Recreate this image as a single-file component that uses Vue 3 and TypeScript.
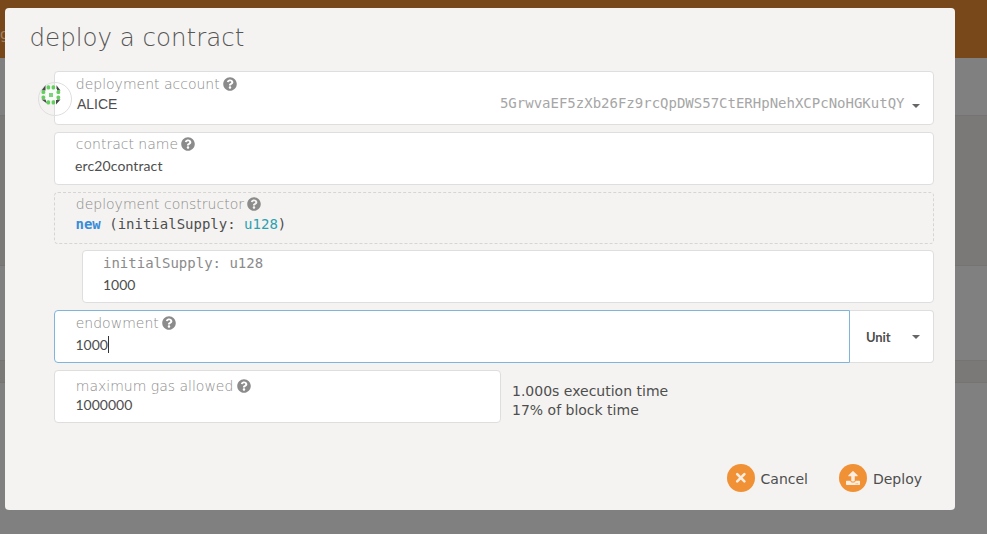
<script setup lang="ts">
import { ref } from 'vue'

const title = 'deploy a contract'
const contractName = ref('erc20contract')
const initialSupply = ref('1000')
const endowment = ref('1000')
const gas = ref('1000000')
const helpPath =
  'M504 256c0 137-111 248-248 248S8 393 8 256 119 8 256 8s248 111 248 248zM262.700 90c-54.500 0-89.300 23-116.500 63.800-3.500 5.300-2.400 12.400 2.700 16.300l34.700 26.300c5.200 3.900 12.600 3 16.700-2.100 17.900-22.700 30.100-35.800 57.300-35.800 20.400 0 45.700 13.100 45.700 33 0 15-12.400 22.700-32.500 34C247.100 238.500 216 254.900 216 296v4c0 6.600 5.400 12 12 12h56c6.600 0 12-5.400 12-12v-1.300c0-28.500 83.200-29.600 83.200-106.700 0-58-60.200-102-116.500-102zM256 338c-25.400 0-46 20.600-46 46s20.600 46 46 46 46-20.600 46-46-20.600-46-46-46z'
</script>

<template>
  <div class="page">
    <div class="backdrop">
      <div class="topbar"><span>g</span></div>
      <div class="tabs"></div>
      <div class="band tall"></div>
      <div class="panel"></div>
      <div class="band short"></div>
      <div class="rest"></div>
    </div>
    <section class="modal">
      <h1>{{ title }}</h1>
      <div class="fields">
        <div class="field account">
          <svg class="avatar" viewBox="0 0 34 34">
            <circle cx="17" cy="17" r="16.500" fill="none" stroke="#dededf" />
            <path d="M7.500 3.200V8.500H3.500zM18.500 3.200V8.500H22.500zM3.500 17.500H7.500L9 21.500zM18 22.500v-5h4.500z" fill="#464646" />
            <path d="M8 7h11v11H8z" fill="#fbfbfb" />
            <g fill="#60d25c">
              <rect x="8.600" y="3.200" width="3.500" height="4.200" rx="1.500" />
              <rect x="13.600" y="3.200" width="3.500" height="4.200" rx="1.500" />
              <rect x="8.600" y="18.300" width="3.500" height="4.200" rx="1.500" />
              <rect x="13.600" y="18.300" width="3.500" height="4.200" rx="1.500" />
              <rect x="3.500" y="8.300" width="3.700" height="3.800" rx="1.500" />
              <rect x="3.500" y="13.500" width="3.700" height="3.800" rx="1.500" />
              <rect x="18.500" y="8.300" width="3.700" height="3.800" rx="1.500" />
              <rect x="18.500" y="13.500" width="3.700" height="3.800" rx="1.500" />
              <rect x="11" y="11" width="4" height="4" fill="#7ad47a" />
            </g>
          </svg>
          <label>deployment account <svg class="help" viewBox="0 0 512 512"><path :d="helpPath" /></svg></label>
          <div class="row">
            <span class="name">ALICE</span>
            <span class="address">5GrwvaEF5zXb26Fz9rcQpDWS57CtERHpNehXCPcNoHGKutQY</span>
            <i class="caret"></i>
          </div>
        </div>
        <div class="field contract">
          <label>contract name <svg class="help" viewBox="0 0 512 512"><path :d="helpPath" /></svg></label>
          <div class="value">{{ contractName }}</div>
        </div>
        <div class="field ctor">
          <label>deployment constructor <svg class="help" viewBox="0 0 512 512"><path :d="helpPath" /></svg></label>
          <div class="code"><b>new</b> (initialSupply: <em>u128</em>)</div>
        </div>
        <div class="field supply">
          <div class="code param">initialSupply: u128</div>
          <div class="value">{{ initialSupply }}</div>
        </div>
        <div class="endow-row">
          <div class="field endow">
            <label>endowment <svg class="help" viewBox="0 0 512 512"><path :d="helpPath" /></svg></label>
            <div class="value">{{ endowment }}<i class="cursor"></i></div>
          </div>
          <div class="unit">
            <span>Unit</span>
            <i class="caret"></i>
          </div>
        </div>
        <div class="gas-row">
          <div class="field gas">
            <label>maximum gas allowed <svg class="help" viewBox="0 0 512 512"><path :d="helpPath" /></svg></label>
            <div class="value">{{ gas }}</div>
          </div>
          <div class="estimate">
            <div>1.000s execution time</div>
            <div>17% of block time</div>
          </div>
        </div>
      </div>
      <div class="actions">
        <button type="button">
          <span class="disc">
            <svg width="14" height="14" viewBox="0 0 14 14"><path d="M3.200 3.200l7.200 7.200M10.400 3.200l-7.200 7.200" stroke="#fbeee0" stroke-width="2.600" stroke-linecap="round" /></svg>
          </span>
          <span class="caption">Cancel</span>
        </button>
        <button type="button">
          <span class="disc">
            <svg width="14" height="14" viewBox="0 0 512 512"><path fill="#fbeee0" d="M296 384h-80c-13.300 0-24-10.700-24-24V192h-87.700c-17.800 0-26.700-21.500-14.100-34.100L242.300 5.700c7.500-7.500 19.800-7.500 27.300 0l152.200 152.200c12.600 12.600 3.700 34.100-14.100 34.100H320v168c0 13.300-10.700 24-24 24zm216-8v112c0 13.300-10.700 24-24 24H24c-13.300 0-24-10.700-24-24V376c0-13.300 10.700-24 24-24h136v8c0 30.900 25.100 56 56 56h80c30.900 0 56-25.100 56-56v-8h136c13.300 0 24 10.700 24 24zm-124 88c0-11-9-20-20-20s-20 9-20 20 9 20 20 20 20-9 20-20zm64 0c0-11-9-20-20-20s-20 9-20 20 9 20 20 20 20-9 20-20z" /></svg>
          </span>
          <span class="caption">Deploy</span>
        </button>
      </div>
    </section>
  </div>
</template>

<style>
body {
  overflow: hidden;
}
</style>

<style scoped>
* {
  box-sizing: border-box;
}
.page {
  display: flex;
  position: relative;
  width: 987px;
  height: 534px;
  padding: 8px 32px 24px 5px;
  font-family: 'DejaVu Sans', sans-serif;
  font-size: 14px;
  color: #4e4e4e;
}
.backdrop {
  position: absolute;
  inset: 0;
  display: flex;
  flex-direction: column;
  background: #808080;
}
.topbar {
  height: 58px;
  padding-top: 25px;
  background: #79481a;
  color: #a18467;
  font-size: 14px;
  line-height: 18px;
}
.tabs {
  height: 57px;
}
.band {
  background: #7a7977;
  border-top: 1px solid #757473;
  border-bottom: 1px solid #757473;
}
.tall {
  height: 151px;
}
.panel {
  height: 94px;
}
.short {
  height: 23px;
}
.rest {
  flex: 1;
}
.modal {
  position: relative;
  width: 950px;
  height: 502px;
  padding: 13px 21px 0 24.500px;
  border-radius: 4px;
  background: #f4f3f1;
}
h1 {
  margin: 0;
  height: 50px;
  font-size: 24.500px;
  line-height: 34px;
  font-weight: 200;
  color: #565656;
  white-space: nowrap;
}
.fields {
  display: flex;
  flex-direction: column;
  gap: 7px;
  margin-left: 24.500px;
}
.field {
  position: relative;
  height: 53px;
  padding: 2px 13.500px 0 20.500px;
  border: 1px solid #dededf;
  border-radius: 4px;
  background: #fff;
}
label {
  display: flex;
  align-items: center;
  gap: 3.250px;
  height: 20px;
  padding-left: 0.250px;
  font-weight: 200;
  color: #8b8b8b;
  white-space: nowrap;
}
.help {
  width: 14px;
  height: 14px;
  fill: #8b8b8b;
}
.value {
  display: flex;
  align-items: center;
  height: 20px;
  margin-top: 1px;
  font-family: Lato, sans-serif;
}
.contract .value {
  margin-left: -0.500px;
  letter-spacing: 0.120px;
}
.account {
  height: 54px;
}
.avatar {
  position: absolute;
  left: -17px;
  top: 10px;
  width: 34px;
  height: 34px;
}
.row {
  display: flex;
  align-items: center;
  height: 20px;
  margin-top: -1px;
}
.name {
  flex: 1;
  padding: 2px 0 0 1.500px;
  font-family: 'Liberation Sans', sans-serif;
}
.address {
  font-family: 'DejaVu Sans Mono', monospace;
  color: #a6a6a6;
}
.caret {
  width: 0;
  height: 0;
  margin-left: 7px;
  border: 4px solid transparent;
  border-top-color: #666;
  border-bottom: 0;
}
.row .caret {
  margin-top: 5px;
}
.contract {
  padding-top: 1px;
}
.ctor {
  height: 52px;
  border-style: dashed;
  border-color: #d5d5d4;
  background: transparent;
}
.ctor label {
  margin-top: -1px;
}
.code {
  height: 20px;
  line-height: 20px;
  font-family: 'DejaVu Sans Mono', monospace;
  white-space: pre;
}
.code b {
  color: #388cd8;
}
.code em {
  font-style: normal;
  color: #2aa1b1;
}
.code.param {
  color: #8b8b8b;
}
.supply {
  margin: -1px 0 0 28px;
  padding-left: 20px;
}
.endow-row,
.gas-row {
  display: flex;
}
.endow {
  width: 796px;
  border-color: #7fb5dd;
  border-radius: 4px 0 0 4px;
}
.cursor {
  width: 1px;
  height: 17px;
  background: #333;
}
.unit {
  display: flex;
  align-items: center;
  justify-content: space-between;
  width: 84px;
  padding: 0 13.500px 0 16px;
  border: 1px solid #dededf;
  border-left: 0;
  border-radius: 0 4px 4px 0;
  background: #fff;
  font: bold 13px Lato, sans-serif;
  letter-spacing: -0.100px;
}
.unit .caret {
  margin-top: 1px;
}
.gas {
  width: 447px;
  padding-top: 5px;
}
.gas .value {
  margin-top: -2px;
}
.estimate {
  padding: 12px 0 0 11px;
  line-height: 19px;
  white-space: nowrap;
}
.actions {
  display: flex;
  justify-content: flex-end;
  gap: 31px;
  margin-top: 41px;
  padding-right: 12px;
}
button {
  display: flex;
  align-items: center;
  gap: 6px;
  height: 28px;
  padding: 0;
  border: 0;
  background: none;
  font: inherit;
  color: inherit;
}
.caption {
  padding-top: 2px;
}
.disc {
  display: grid;
  place-items: center;
  width: 28px;
  height: 28px;
  border-radius: 50%;
  background: #f19135;
}
</style>
